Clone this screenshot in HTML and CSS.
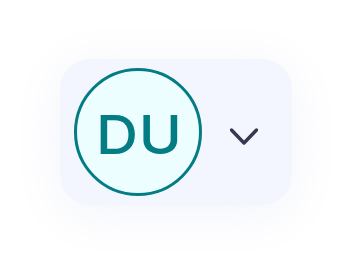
FILE: index.html
```html
<!DOCTYPE html>
<html>
<head>
<meta charset="utf-8">
<link rel="stylesheet" href="styles.css">
</head>
<body>
<div class="stage">
  <button class="user-menu" type="button">
    <span class="avatar"><span class="initials">DU</span></span>
    <svg class="chevron" width="28" height="28" viewBox="0 0 28 28" aria-hidden="true">
      <polyline points="1.5,10 14,23 26.5,10" fill="none" stroke="#363850" stroke-width="3.4" stroke-linecap="round" stroke-linejoin="round"/>
    </svg>
  </button>
</div>
</body>
</html>
```
FILE: styles.css
```css
html, body {
  margin: 0;
  padding: 0;
  background: #ffffff;
}
.stage {
  width: 352px;
  height: 264px;
  padding: 59px 0 0 60px;
  box-sizing: border-box;
}
.user-menu {
  display: flex;
  align-items: center;
  gap: 28px;
  width: 232px;
  height: 146px;
  box-sizing: border-box;
  padding: 0 34px 0 14px;
  margin: 0;
  border: none;
  border-radius: 30px;
  background: #f3f6fe;
  box-shadow: 0 8px 48px rgba(110, 130, 210, 0.09);
  cursor: pointer;
}
.avatar {
  flex: none;
  width: 128px;
  height: 128px;
  box-sizing: border-box;
  border: 3.5px solid #037c83;
  border-radius: 50%;
  background: #ecfeff;
  display: flex;
  align-items: center;
  justify-content: center;
}
.initials {
  font-family: Inter, "Noto Sans", sans-serif;
  font-weight: 500;
  font-size: 53px;
  line-height: 1;
  letter-spacing: 0.5px;
  color: #037c83;
  margin-top: 6px;
  margin-left: 2px;
  transform: scaleX(1.1);
}
.chevron {
  flex: none;
  display: block;
  margin-top: 4px;
}
```
